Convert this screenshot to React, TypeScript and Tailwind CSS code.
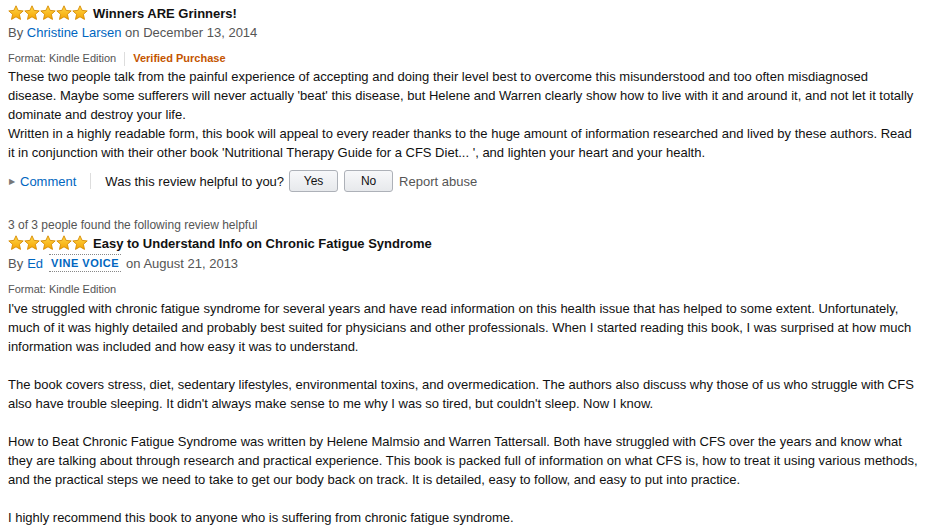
import React from 'react';

const Star: React.FC = () => (
    <svg width="16" height="16" viewBox="0 0 16 16" className="block">
        <defs>
            <linearGradient id="sg" x1="0" y1="0" x2="0" y2="1">
                <stop offset="0" stopColor="#ffd84a" />
                <stop offset="1" stopColor="#f5a300" />
            </linearGradient>
        </defs>
        <path
            d="M8 0.8 L10.1 5.4 L15.2 5.9 L11.4 9.3 L12.5 14.4 L8 11.8 L3.5 14.4 L4.6 9.3 L0.8 5.9 L5.9 5.4 Z"
            fill="url(#sg)"
            stroke="#d68a00"
            strokeWidth="0.9"
            strokeLinejoin="round"
        />
    </svg>
);

const Stars: React.FC = () => (
    <div className="flex">
        {[0, 1, 2, 3, 4].map((i) => (
            <Star key={i} />
        ))}
    </div>
);

const App: React.FC = () => {
    return (
        <div className="w-[937px] h-[526px] overflow-hidden bg-white px-2 pt-[3px] text-[13px] leading-[19px] text-[#111]" style={{ fontFamily: '"Liberation Sans", Arial, sans-serif' }}>
            {/* review 1 */}
            <div className="flex items-center gap-[5px] h-[20px]">
                <Stars />
                <span className="font-bold text-[13px] text-[#111]">Winners ARE Grinners!</span>
            </div>
            <div className="h-[20px] text-[#555]">
                By <a href="#" className="text-[#0066c0]">Christine Larsen</a> on December 13, 2014
            </div>
            <div className="flex items-center h-[24px] pt-[7px] text-[11px]">
                <span className="text-[#555]">Format: Kindle Edition</span>
                <span className="mx-[8px] h-[14px] border-l border-[#ddd]" />
                <span className="font-bold text-[#c45500]">Verified Purchase</span>
            </div>
            <div className="text-[#111] w-[910px]">
                These two people talk from the painful experience of accepting and doing their level best to overcome this misunderstood and too often misdiagnosed disease. Maybe some sufferers will never actually 'beat' this disease, but Helene and Warren clearly show how to live with it and around it, and not let it totally dominate and destroy your life.
                <br />
                Written in a highly readable form, this book will appeal to every reader thanks to the huge amount of information researched and lived by these authors. Read it in conjunction with their other book 'Nutritional Therapy Guide for a CFS Diet... ', and lighten your heart and your health.
            </div>
            <div className="flex items-center mt-[8px] h-[22px]">
                <span className="text-[#777] text-[8px] ml-[1px] mr-[5px]">&#9654;</span>
                <a href="#" className="text-[#0066c0]">Comment</a>
                <span className="mx-[14px] h-[16px] border-l border-[#ddd]" />
                <span className="text-[#111]">Was this review helpful to you?</span>
                <button className="ml-[5px] w-[49px] h-[22px] rounded-[3px] border border-[#adb1b8] bg-gradient-to-b from-[#f7f8fa] to-[#e7e9ec] text-[12px] text-[#111]">Yes</button>
                <button className="ml-[6px] w-[49px] h-[22px] rounded-[3px] border border-[#adb1b8] bg-gradient-to-b from-[#f7f8fa] to-[#e7e9ec] text-[12px] text-[#111]">No</button>
                <span className="ml-[6px] text-[#555]">Report abuse</span>
            </div>

            {/* review 2 */}
            <div className="mt-[27px] text-[12px] leading-[13px] text-[#555]">3 of 3 people found the following review helpful</div>
            <div className="flex items-center gap-[5px] h-[20px] mt-[1px]">
                <Stars />
                <span className="font-bold text-[13px] text-[#111]">Easy to Understand Info on Chronic Fatigue Syndrome</span>
            </div>
            <div className="flex items-center h-[20px] text-[#555]">
                <span>By</span>
                <a href="#" className="ml-[4px] text-[#0066c0]">Ed</a>
                <span className="ml-[6px] px-[2px] border-y border-dotted border-[#888] text-[11px] leading-[16px] font-bold tracking-[0.5px] text-[#0066c0]">VINE VOICE</span>
                <span className="ml-[5px]">on August 21, 2013</span>
            </div>
            <div className="flex items-center h-[26px] pt-[6px] text-[11px] text-[#555]">Format: Kindle Edition</div>
            <div className="text-[#111] w-[915px]">
                I've struggled with chronic fatigue syndrome for several years and have read information on this health issue that has helped to some extent. Unfortunately, much of it was highly detailed and probably best suited for physicians and other professionals. When I started reading this book, I was surprised at how much information was included and how easy it was to understand.
                <br />
                <br />
                The book covers stress, diet, sedentary lifestyles, environmental toxins, and overmedication. The authors also discuss why those of us who struggle with CFS also have trouble sleeping. It didn't always make sense to me why I was so tired, but couldn't sleep. Now I know.
                <br />
                <br />
                How to Beat Chronic Fatigue Syndrome was written by Helene Malmsio and Warren Tattersall. Both have struggled with CFS over the years and know what they are talking about through research and practical experience. This book is packed full of information on what CFS is, how to treat it using various methods, and the practical steps we need to take to get our body back on track. It is detailed, easy to follow, and easy to put into practice.
                <br />
                <br />
                I highly recommend this book to anyone who is suffering from chronic fatigue syndrome.
            </div>
        </div>
    );
};

export default App;
